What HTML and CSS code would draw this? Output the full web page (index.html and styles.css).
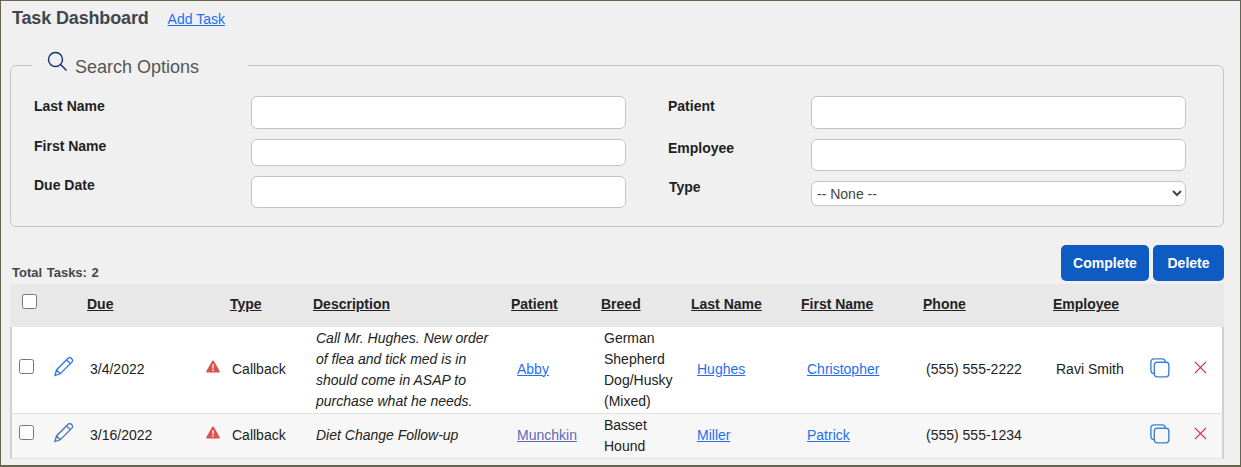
FILE: index.html
```html
<!DOCTYPE html>
<html lang="en">
<head>
  <meta charset="UTF-8" />
  <title>Task Dashboard</title>
  <link rel="stylesheet" href="styles.css">
</head>
<body>
<div class="pagina">

  <div class="topo">
    <h1>Task Dashboard</h1>
    <a href="#" class="link">Add Task</a>
  </div>

  <!-- Search -->
  <fieldset class="busca">
    <legend>
      <svg class="lupa" width="22" height="22" viewBox="0 0 22 22" fill="none" stroke="#12306b" stroke-width="1.4">
        <circle cx="9.5" cy="8.5" r="7"/>
        <path d="M14.6 13.6 L20.5 19.5"/>
      </svg>
      Search Options
    </legend>
    <div class="busca-cols">
      <div class="busca-col esq">
        <label class="l1">Last Name</label>
        <input type="text" class="alto">
        <label class="l2">First Name</label>
        <input type="text" class="baixo">
        <label class="l3">Due Date</label>
        <input type="text" class="medio">
      </div>
      <div class="busca-col dir">
        <label class="l1">Patient</label>
        <input type="text" class="alto">
        <label class="l2">Employee</label>
        <input type="text" class="medio">
        <label class="l3">Type</label>
        <select><option>-- None --</option></select>
      </div>
    </div>
  </fieldset>

  <div class="acoes">
    <span class="total">Total Tasks: 2</span>
    <div class="botoes">
      <button type="button" class="btn-complete">Complete</button>
      <button type="button" class="btn-delete">Delete</button>
    </div>
  </div>

  <table class="tarefas">
    <colgroup>
      <col class="c-check"><col class="c-edit"><col class="c-due"><col class="c-type"><col class="c-desc">
      <col class="c-patient"><col class="c-breed"><col class="c-last"><col class="c-first"><col class="c-phone">
      <col class="c-emp"><col class="c-copy"><col class="c-del">
    </colgroup>
    <thead>
      <tr>
        <th class="th-check"><input type="checkbox" class="check"></th>
        <th></th>
        <th class="th-due">Due</th>
        <th class="th-type">Type</th>
        <th class="th-desc">Description</th>
        <th>Patient</th>
        <th>Breed</th>
        <th>Last Name</th>
        <th>First Name</th>
        <th class="th-phone">Phone</th>
        <th class="th-phone">Employee</th>
        <th></th>
        <th></th>
      </tr>
    </thead>
    <tbody>
      <tr class="linha1">
        <td class="td-check"><input type="checkbox" class="check"></td>
        <td class="td-icon">
          <svg width="20" height="20" viewBox="1 1 21 21" fill="none" stroke="#2f78ea" stroke-width="1.4"><path d="M2 20.5 L3.6 14.6 L15.8 2.4 C16.8 1.4 18.2 1.4 19.2 2.4 L19.8 3 C20.8 4 20.8 5.4 19.8 6.4 L7.6 18.6 Z M3.6 14.6 L7.6 18.6 M14.2 4 L18.2 8"/></svg>
        </td>
        <td class="td-due">3/4/2022</td>
        <td class="td-type"><svg class="alerta" width="14" height="13" viewBox="0 0 14 13"><path d="M7 0.6 C7.5 0.6 7.8 0.9 8 1.2 L13.6 11 C14 11.8 13.5 12.6 12.7 12.6 L1.3 12.6 C0.5 12.6 0 11.8 0.4 11 L6 1.2 C6.2 0.9 6.5 0.6 7 0.6 Z" fill="#d9534f"/><path d="M7 4.2 V8.4 M7 9.6 V11" stroke="#fff" stroke-width="1.3"/></svg>Callback</td>
        <td class="td-desc multi">Call Mr. Hughes. New order of flea and tick med is in should come in ASAP to purchase what he needs.</td>
        <td><a href="#" class="link">Abby</a></td>
        <td class="td-breed multi">German Shepherd Dog/Husky (Mixed)</td>
        <td><a href="#" class="link">Hughes</a></td>
        <td><a href="#" class="link">Christopher</a></td>
        <td>(555) 555-2222</td>
        <td>Ravi Smith</td>
        <td class="td-copy">
          <svg width="20" height="20" viewBox="0 0 22 22" fill="none" stroke="#3f7fd0" stroke-width="1.5"><rect x="4.7" y="4.7" width="16" height="16" rx="3"/><path d="M4.7 17 C2.4 17 1 15.6 1 13.4 V4.4 C1 2.2 2.4 1 4.4 1 H13.4 C15.4 1 16.8 2.4 16.8 4.7"/></svg>
        </td>
        <td class="td-del">
          <svg width="13" height="13" viewBox="0 0 14 14" stroke="#c9303e" stroke-width="1.3"><path d="M1 1 L13 13 M13 1 L1 13"/></svg>
        </td>
      </tr>
      <tr class="linha2">
        <td class="td-check"><input type="checkbox" class="check"></td>
        <td class="td-icon">
          <svg width="20" height="20" viewBox="1 1 21 21" fill="none" stroke="#4a74b8" stroke-width="1.4"><path d="M2 20.5 L3.6 14.6 L15.8 2.4 C16.8 1.4 18.2 1.4 19.2 2.4 L19.8 3 C20.8 4 20.8 5.4 19.8 6.4 L7.6 18.6 Z M3.6 14.6 L7.6 18.6 M14.2 4 L18.2 8"/></svg>
        </td>
        <td class="td-due">3/16/2022</td>
        <td class="td-type"><svg class="alerta" width="14" height="13" viewBox="0 0 14 13"><path d="M7 0.6 C7.5 0.6 7.8 0.9 8 1.2 L13.6 11 C14 11.8 13.5 12.6 12.7 12.6 L1.3 12.6 C0.5 12.6 0 11.8 0.4 11 L6 1.2 C6.2 0.9 6.5 0.6 7 0.6 Z" fill="#d9534f"/><path d="M7 4.2 V8.4 M7 9.6 V11" stroke="#fff" stroke-width="1.3"/></svg>Callback</td>
        <td class="td-desc">Diet Change Follow-up</td>
        <td><a href="#" class="link roxo">Munchkin</a></td>
        <td class="td-breed multi">Basset Hound</td>
        <td><a href="#" class="link">Miller</a></td>
        <td><a href="#" class="link">Patrick</a></td>
        <td>(555) 555-1234</td>
        <td></td>
        <td class="td-copy">
          <svg width="20" height="20" viewBox="0 0 22 22" fill="none" stroke="#3f7fd0" stroke-width="1.5"><rect x="4.7" y="4.7" width="16" height="16" rx="3"/><path d="M4.7 17 C2.4 17 1 15.6 1 13.4 V4.4 C1 2.2 2.4 1 4.4 1 H13.4 C15.4 1 16.8 2.4 16.8 4.7"/></svg>
        </td>
        <td class="td-del">
          <svg width="13" height="13" viewBox="0 0 14 14" stroke="#c9303e" stroke-width="1.3"><path d="M1 1 L13 13 M13 1 L1 13"/></svg>
        </td>
      </tr>
    </tbody>
  </table>

</div>
</body>
</html>
```

FILE: styles.css
```css
* { box-sizing: border-box; }
html, body { height: 100%; }
body {
  margin: 0;
  font-family: 'Liberation Sans', Arial, sans-serif;
  font-size: 14px;
  color: #222;
  background: #f0f0f0;
}
.pagina {
  height: 467px;
  border: 1px solid #66664f;
  border-width: 1px 1px 2px 1px;
  padding: 0 16px 0 9px;
  overflow: hidden;
}
.link { color: #1f70ee; }
.roxo { color: #5c6ab8; }

/* Topo */
.topo {
  display: flex;
  align-items: baseline;
  gap: 19px;
  padding: 7px 0 0 2px;
}
h1 {
  margin: 0;
  font-size: 18px;
  line-height: 21px;
  letter-spacing: -0.15px;
  color: #40464a;
}

/* Busca */
.busca {
  margin: 23px 0 0;
  padding: 0;
  height: 175px;
  border: 1px solid #c4c4c4;
  border-radius: 6px;
  min-width: 0;
}
legend {
  margin-left: 21px;
  padding: 4px 49px 0 14px;
  font-size: 18px;
  line-height: 21px;
  color: #555;
  display: flex;
  align-items: center;
  gap: 7px;
}
.lupa { position: relative; top: -5px; }
.busca-cols {
  display: grid;
  grid-template-columns: 634px 518px;
  padding: 18px 0 0 23px;
}
.busca-col {
  display: grid;
  align-items: start;
  align-content: start;
  row-gap: 10px;
}
.esq { grid-template-columns: 217px 375px; }
.dir { grid-template-columns: 143px 375px; }
label {
  font-weight: bold;
  font-size: 14px;
  line-height: 16px;
  color: #1f1f1f;
  padding-top: 2px;
}
.l2, .l3 { padding-top: 1px; }
.esq .l2 { margin-top: -2px; }
.dir .l3 { margin-top: -3px; padding-left: 1px; }
input[type=text], select {
  width: 100%;
  background: #fff;
  border: 1px solid #c4c4c4;
  border-radius: 6px;
  font: 14px 'Liberation Sans', Arial, sans-serif;
  color: #444;
}
.alto { height: 33px; }
.baixo { height: 27px; }
.medio { height: 32px; }
select { height: 25px; padding-left: 1px; }

/* Acoes */
.acoes {
  display: flex;
  justify-content: space-between;
  align-items: flex-end;
  margin-top: 18px;
  height: 36px;
}
.total {
  font-size: 13px;
  font-weight: bold;
  word-spacing: 1px;
  color: #40464a;
  margin: 0 0 0 2px;
  line-height: 16px;
}
.botoes { display: flex; gap: 4px; }
button {
  height: 36px;
  border: none;
  border-radius: 5px;
  background: #0f5bc4;
  color: #fff;
  font: bold 14px 'Liberation Sans', Arial, sans-serif;
  padding: 0;
}
.btn-complete { width: 88px; }
.btn-delete { width: 71px; }

/* Tabela */
.tarefas {
  table-layout: fixed;
  width: 1214px;
  margin-top: 3px;
  border-collapse: separate;
  border-spacing: 0;
}
.c-check { width: 40px; }
.c-edit { width: 34px; }
.c-due { width: 119px; }
.c-type { width: 110px; }
.c-desc { width: 197px; }
.c-patient { width: 90px; }
.c-breed { width: 90px; }
.c-last { width: 110px; }
.c-first { width: 119px; }
.c-phone { width: 130px; }
.c-emp { width: 95px; }
.c-copy { width: 40px; }
.c-del { width: 40px; }

thead th {
  height: 43px;
  background: #e8e8e8;
  text-align: left;
  font-size: 14px;
  color: #222;
  text-decoration: underline;
  padding: 0 0 3px 1px;
}
thead .th-check { padding: 0 0 8px 12px; }
thead .th-due { padding-left: 3px; }
thead .th-type { padding-left: 27px; }
thead .th-desc { padding-left: 0; }
thead .th-phone { padding-left: 4px; }
.check {
  display: block;
  width: 15px;
  height: 15px;
  margin: 0;
}
tbody td {
  padding: 0 0 2px 7px;
  line-height: 21px;
  vertical-align: middle;
  border-bottom: 1px solid #e2e2e2;
}
.linha1 td { background: #fff; height: 87px; }
.linha2 td { background: #f7f7f7; height: 45px; }
tbody td:first-child { border-left: 2px solid #d0d0d0; }
tbody td:last-child { border-right: 2px solid #d0d0d0; }
tbody .multi { padding-bottom: 0; }
tbody .td-check { padding: 0 0 0 7px; }
.td-check .check { position: relative; top: -4px; }
tbody .td-icon { padding: 0 0 0 4px; }
.td-icon svg { display: block; margin-top: -6px; }
tbody .td-due { padding-left: 6px; }
tbody .td-type { padding-left: 3px; white-space: nowrap; }
.alerta { margin-right: 12px; position: relative; top: -1px; }
tbody .td-desc { font-style: italic; padding-left: 3px; padding-right: 15px; }
tbody .td-breed { padding-left: 4px; padding-right: 20px; }
tbody .td-copy { padding: 0 0 0 6px; }
.td-copy svg { display: block; margin-top: -5px; }
tbody .td-del { padding: 0; }
.td-del svg { display: block; margin: -5px 0 0 10px; }
```
